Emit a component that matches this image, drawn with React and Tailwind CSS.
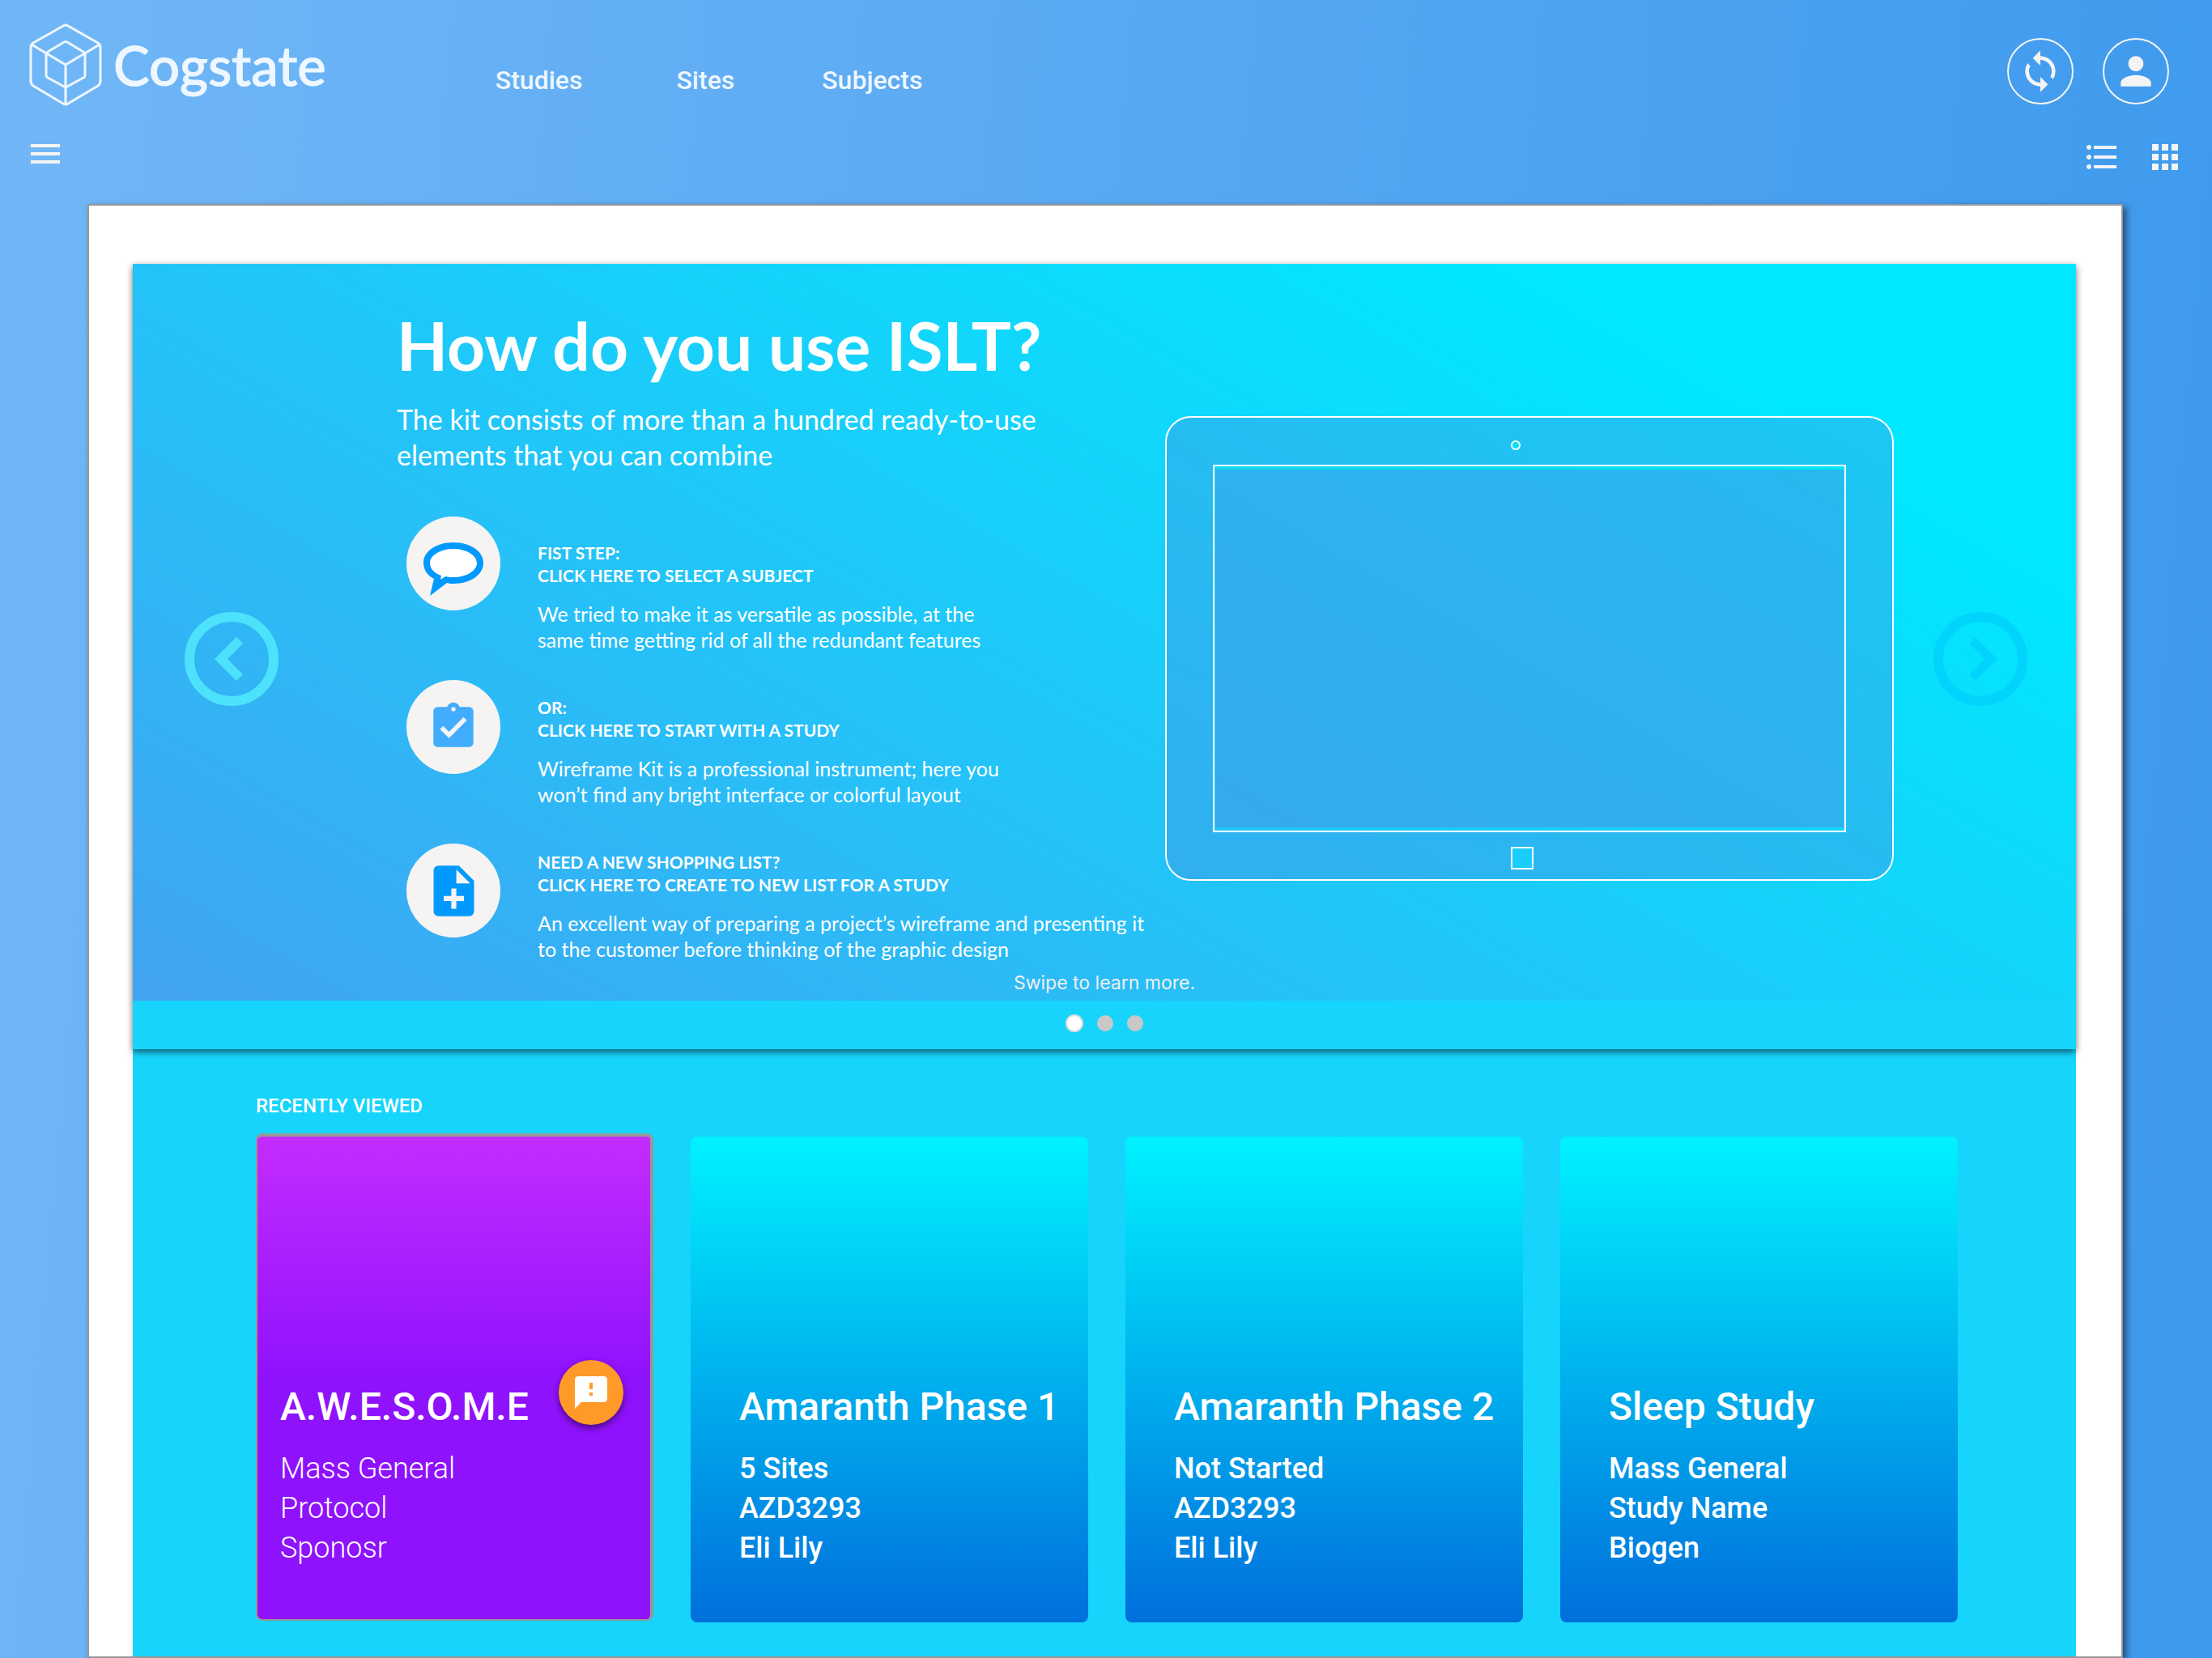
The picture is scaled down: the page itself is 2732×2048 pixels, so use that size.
import React from "react";
import { MdSync, MdPerson, MdMenu, MdFormatListBulleted, MdApps, MdFeedback, MdAssignmentTurnedIn, MdNoteAdd } from "react-icons/md";

function LogoMark() {
  return (
    <svg viewBox="0 0 90 102" className="h-[102px] w-[90px]" fill="none" stroke="#eef7ff" strokeWidth="3" strokeLinejoin="round" aria-hidden="true">
      <path d="M42 3 Q45 1 48 3 L85 24 Q88 26 88 30 V71 Q88 75 85 77 L48 99 Q45 101 42 99 L5 77 Q2 75 2 71 V30 Q2 26 5 24 Z" />
      <path d="M3 26 L45 51 L87 26 M45 51 V99" />
      <path d="M43 23 Q45 22 47 23 L67 35 Q69 36 69 38 V64 Q69 66 67 67 L45 79 L23 67 Q21 66 21 64 V38 Q21 36 23 35 Z" />
    </svg>
  );
}

function BubbleIcon() {
  return (
    <svg viewBox="0 0 116 116" className="h-full w-full" aria-hidden="true">
      <path d="M58 32 C37 32 21 43 21 57 C21 66 26 73 34 77 L29 98 L50 82 C53 83 56 83 58 83 C79 83 95 72 95 57 C95 43 79 32 58 32 Z" fill="#0099ff" />
      <path d="M58 40 C42 40 29 48 29 57.500 C29 64 34 70 43 73 L42 78 L48 74 C51 75 55 75 58 75 C74 75 87 67 87 57.500 C87 48 74 40 58 40 Z" fill="#fff" />
    </svg>
  );
}

function Arrow({ label, tone, flip }) {
  return (
    <button type="button" aria-label={label} className={"size-[116px] shrink-0 " + tone}>
      <svg viewBox="0 0 116 116" className="h-full w-full" aria-hidden="true">
        <circle cx="58" cy="58" r="52" fill="none" stroke="currentColor" strokeWidth="12" />
        <path d={flip ? "M79 58 L52 31 L44 39 L63 58 L44 77 L52 85 Z" : "M37 58 L64 31 L72 39 L53 58 L72 77 L64 85 Z"} fill="currentColor" />
      </svg>
    </button>
  );
}

function Tablet() {
  return (
    <svg viewBox="0 0 900 574" className="mt-[88px] w-[900px] shrink-0" aria-hidden="true">
      <path
        fillRule="evenodd"
        fill="#4a90e2"
        fillOpacity="0.38"
        d="M32 0 H868 A32 32 0 0 1 900 32 V542 A32 32 0 0 1 868 574 H32 A32 32 0 0 1 0 542 V32 A32 32 0 0 1 32 0 Z M59 60 V514 H841 V60 Z M427 532 V560 H455 V532 Z M427 36 A6 6 0 1 0 439 36 A6 6 0 1 0 427 36 Z"
      />
      <rect x="62" y="66" width="776" height="442" fill="#4a90e2" fillOpacity="0.53" />
      <g fill="none" stroke="#fff" strokeWidth="2">
        <rect x="1" y="1" width="898" height="572" rx="31" />
        <rect x="60" y="61" width="780" height="452" />
        <rect x="428" y="533" width="26" height="26" />
        <circle cx="433" cy="36" r="5" />
      </g>
    </svg>
  );
}

const steps = [
  { title: "FIST STEP:", action: "CLICK HERE TO SELECT A SUBJECT", lines: ["We tried to make it as versatile as possible, at the", "same time getting rid of all the redundant features"] },
  { title: "OR:", action: "CLICK HERE TO START WITH A STUDY", lines: ["Wireframe Kit is a professional instrument; here you", "won’t find any bright interface or colorful layout"] },
  { title: "NEED A NEW SHOPPING LIST?", action: "CLICK HERE TO CREATE TO NEW LIST FOR A STUDY", lines: ["An excellent way of preparing a project’s wireframe and presenting it", "to the customer before thinking of the graphic design"] },
];

const studies = [
  { title: "Amaranth Phase 1", lines: ["5 Sites", "AZD3293", "Eli Lily"] },
  { title: "Amaranth Phase 2", lines: ["Not Started", "AZD3293", "Eli Lily"] },
  { title: "Sleep Study", lines: ["Mass General", "Study Name", "Biogen"] },
];

function Header() {
  return (
    <header className="text-[#f4f4f4]">
      <div className="flex items-start pt-[29px] pr-[53px] pl-9">
        <a href="#home" className="flex items-center gap-[14px] text-[#eef7ff]">
          <LogoMark />
          <span className="font-['Lato'] text-[67px] leading-[80px] font-medium [-webkit-text-stroke:1px_#eef7ff]">Cogstate</span>
        </a>
        <nav className="ml-[209px] flex gap-[116px] pt-[50px] text-[32px] leading-10 font-medium text-[#eef7ff]">
          <a href="#studies">Studies</a>
          <a href="#sites">Sites</a>
          <a href="#subjects" className="-ml-2">Subjects</a>
        </nav>
        <div className="ml-auto flex gap-9 pt-[18px]">
          <button type="button" aria-label="Sync" className="flex size-[82px] items-center justify-center rounded-full border-2 border-[#f4f4f4]">
            <MdSync size={56} />
          </button>
          <button type="button" aria-label="Account" className="flex size-[82px] items-center justify-center rounded-full border-2 border-[#f4f4f4]">
            <MdPerson size={56} />
          </button>
        </div>
      </div>
      <div className="flex items-start justify-between pt-[35px] pr-[34px] pb-[34px] pl-8">
        <button type="button" aria-label="Menu"><MdMenu size={48} /></button>
        <div className="flex gap-[30px] pt-1">
          <button type="button" aria-label="List view"><MdFormatListBulleted size={48} /></button>
          <button type="button" aria-label="Grid view"><MdApps size={48} /></button>
        </div>
      </div>
    </header>
  );
}

function StepButton({ label, children, tone }) {
  return (
    <button type="button" aria-label={label} className={"flex size-[116px] items-center justify-center rounded-full bg-[#f6f4f3] " + tone}>
      {children}
    </button>
  );
}

function Hero() {
  return (
    <section className="relative shadow-[0_3px_8px_rgba(0,0,0,0.6)]">
      <div className="bg-[linear-gradient(30deg,#42a3f2_0%,#00e8ff_83%)]">
        <div className="flex items-center pr-[60px] pl-16">
          <Arrow label="Previous" tone="text-[#4de2fb] mt-[114px]" />
          <div className="ml-[146px] min-w-0 flex-1 pt-[50px] font-['Lato'] text-white">
            <h1 className="text-[82px] leading-[100px] font-bold">How do you use ISLT?</h1>
            <p className="mt-5 text-[34px] leading-11">
              The kit consists of more than a hundred ready-to-use<br />elements that you can combine
            </p>
            <div className="mt-[54px] flex">
              <div className="ml-3 flex flex-col gap-[86px]">
                <StepButton label="Select a subject" tone=""><BubbleIcon /></StepButton>
                <StepButton label="Start with a study" tone="text-[#42adff]"><MdAssignmentTurnedIn size={66} /></StepButton>
                <StepButton label="New shopping list" tone="text-[#0099ff]"><MdNoteAdd size={75} /></StepButton>
              </div>
              <div className="ml-[46px] flex flex-col gap-[54px] pt-[31px] whitespace-nowrap">
                {steps.map((s) => (
                  <div key={s.title}>
                    <h2 className="text-[21px] leading-7 font-bold">{s.title}<br />{s.action}</h2>
                    <p className="mt-[17px] text-[25px] leading-8">{s.lines[0]}<br />{s.lines[1]}</p>
                  </div>
                ))}
              </div>
            </div>
          </div>
          <Tablet />
          <Arrow label="Next" tone="text-[#00d4fd] mt-[114px] ml-[49px]" flip />
        </div>
        <p className="pt-3 pb-2 text-center font-['Inter'] text-[23px] leading-7 text-[#f0f0f0]">Swipe to learn more.</p>
      </div>
      <div className="flex h-[60px] items-center justify-center gap-[17px] bg-[#17d4fc] pb-1">
        <button type="button" aria-label="Slide 1" className="size-[22px] rounded-full border-2 border-[#dddddd] bg-white" />
        <button type="button" aria-label="Slide 2" className="size-5 rounded-full bg-[#c8c8c8]" />
        <button type="button" aria-label="Slide 3" className="size-5 rounded-full bg-[#c8c8c8]" />
      </div>
    </section>
  );
}

function Recent() {
  return (
    <section className="pt-[54px] pr-[146px] pb-[42px] pl-[152px] text-white">
      <h2 className="text-[24px] leading-8 font-medium">RECENTLY VIEWED</h2>
      <div className="mt-[18px] grid grid-cols-4 gap-[46px]">
        <article className="flex h-[602px] flex-col justify-end rounded-lg border-t-4 border-r-4 border-b-2 border-l-2 border-[#979797] bg-[linear-gradient(180deg,#c42cff_0%,#8f12fd_50%)] pb-[63px] pl-7">
          <div className="flex items-center justify-between pr-[33px]">
            <h3 className="pt-9 text-[48px] leading-[56px] font-medium">A.W.E.S.O.M.E</h3>
            <button type="button" aria-label="Feedback" className="flex size-20 items-center justify-center rounded-full bg-[#ff9a28] shadow-[0_4px_8px_rgba(0,0,0,0.5)]">
              <MdFeedback size={48} />
            </button>
          </div>
          <p className="mt-6 text-[36px] leading-[49px] font-light">Mass General<br />Protocol<br />Sponosr</p>
        </article>
        {studies.map((s) => (
          <article key={s.title} className="mt-1 flex h-[600px] flex-col justify-end rounded-lg bg-[linear-gradient(180deg,#00f2ff_0%,#006fdc_100%)] pb-[67px] pl-[60px]">
            <h3 className="text-[48px] leading-[56px] font-medium whitespace-nowrap">{s.title}</h3>
            <p className="mt-6 text-[36px] leading-[49px] font-medium">{s.lines[0]}<br />{s.lines[1]}<br />{s.lines[2]}</p>
          </article>
        ))}
      </div>
    </section>
  );
}

export default function App() {
  return (
    <div className="min-h-screen bg-[linear-gradient(95deg,#71b7f7_0%,#3d99ed_100%)] font-['Roboto',sans-serif]">
      <Header />
      <main className="mr-[110px] ml-[108px] border-2 border-[#979797] bg-white pt-[72px] pr-14 pl-[54px] shadow-[4px_4px_8px_rgba(0,0,0,0.5)]">
        <div className="bg-[#17d4fc]">
          <Hero />
          <Recent />
        </div>
      </main>
    </div>
  );
}
